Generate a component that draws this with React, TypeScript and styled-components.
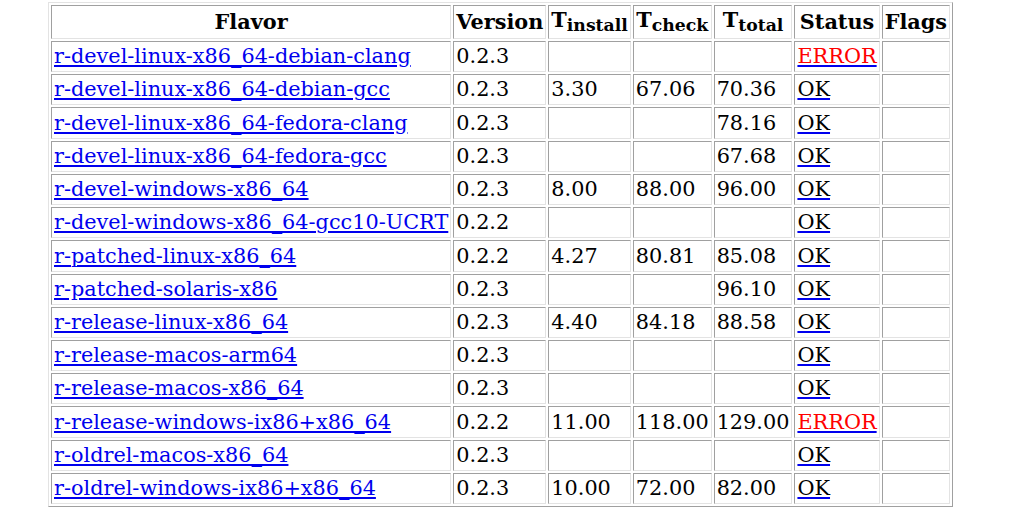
import styled, { createGlobalStyle } from 'styled-components';

const Global = createGlobalStyle`
    body {
        margin: 0;
        background: white;
        font-family: "DejaVu Serif", serif;
        color: black;
    }
`;

const Page = styled.div`
    padding: 2px 0 0 48px;
`;

const Table = styled.table`
    border-collapse: separate;
    border-spacing: 2px;
    border: 1px solid;
    border-color: #e3e3e3 #a0a0a0 #a0a0a0 #e3e3e3;
    font-size: 20.8px;
`;

const Head = styled.th`
    border: 1px solid;
    border-color: #a0a0a0 #e3e3e3 #e3e3e3 #a0a0a0;
    padding: 0 2px;
    height: 32px;
    font-weight: bold;
    text-align: center;
    white-space: nowrap;
    line-height: 1;
`;

const Sub = styled.sub`
    font-size: 0.83em;
    vertical-align: -0.25em;
`;

const Cell = styled.td`
    border: 1px solid;
    border-color: #a0a0a0 #e3e3e3 #e3e3e3 #a0a0a0;
    padding: 0 2px;
    height: 29.22px;
    white-space: nowrap;
    line-height: 1;
`;

const Link = styled.a<{ $tone?: string }>`
    color: #0000ee;
    text-decoration: underline;
    text-decoration-color: #0000ee;

    span {
        color: ${p => p.$tone ?? 'inherit'};
    }
`;

type Row = [string, string, string, string, string, 'OK' | 'ERROR'];

const rows: Row[] = [
    ['r-devel-linux-x86_64-debian-clang', '0.2.3', '', '', '', 'ERROR'],
    ['r-devel-linux-x86_64-debian-gcc', '0.2.3', '3.30', '67.06', '70.36', 'OK'],
    ['r-devel-linux-x86_64-fedora-clang', '0.2.3', '', '', '78.16', 'OK'],
    ['r-devel-linux-x86_64-fedora-gcc', '0.2.3', '', '', '67.68', 'OK'],
    ['r-devel-windows-x86_64', '0.2.3', '8.00', '88.00', '96.00', 'OK'],
    ['r-devel-windows-x86_64-gcc10-UCRT', '0.2.2', '', '', '', 'OK'],
    ['r-patched-linux-x86_64', '0.2.2', '4.27', '80.81', '85.08', 'OK'],
    ['r-patched-solaris-x86', '0.2.3', '', '', '96.10', 'OK'],
    ['r-release-linux-x86_64', '0.2.3', '4.40', '84.18', '88.58', 'OK'],
    ['r-release-macos-arm64', '0.2.3', '', '', '', 'OK'],
    ['r-release-macos-x86_64', '0.2.3', '', '', '', 'OK'],
    ['r-release-windows-ix86+x86_64', '0.2.2', '11.00', '118.00', '129.00', 'ERROR'],
    ['r-oldrel-macos-x86_64', '0.2.3', '', '', '', 'OK'],
    ['r-oldrel-windows-ix86+x86_64', '0.2.3', '10.00', '72.00', '82.00', 'OK'],
];

export default function App() {
    return <Page>
        <Global />
        <Table>
            <thead>
                <tr>
                    <Head>Flavor</Head>
                    <Head>Version</Head>
                    <Head>T<Sub>install</Sub></Head>
                    <Head>T<Sub>check</Sub></Head>
                    <Head>T<Sub>total</Sub></Head>
                    <Head>Status</Head>
                    <Head>Flags</Head>
                </tr>
            </thead>
            <tbody>
                {rows.map(r => <tr key={r[0]}>
                    <Cell><Link href="#">{r[0]}</Link></Cell>
                    <Cell>{r[1]}</Cell>
                    <Cell>{r[2]}</Cell>
                    <Cell>{r[3]}</Cell>
                    <Cell>{r[4]}</Cell>
                    <Cell>
                        <Link href="#" $tone={r[5] === 'ERROR' ? '#ff0000' : '#000000'}>
                            <span>{r[5]}</span>
                        </Link>
                    </Cell>
                    <Cell></Cell>
                </tr>)}
            </tbody>
        </Table>
    </Page>;
}
